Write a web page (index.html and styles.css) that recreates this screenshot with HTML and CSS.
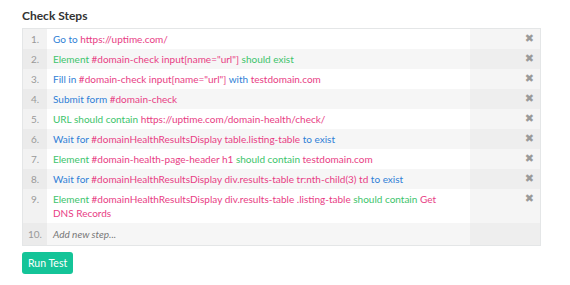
FILE: index.html
```html
<!DOCTYPE html>
<html lang="en">
  <head>
    <title>Check Steps</title>
    <meta charset="utf-8">
    <link rel="stylesheet" href="styles.css">
  </head>
  <body>
  <div class="page">
    <h3 class="title">Check Steps</h3>

    <table class="steps">
      <tr>
        <td class="num">1.</td>
        <td class="desc"><span class="kw">Go to</span> <span class="val">https://uptime.com/</span></td>
        <td class="act"><span class="del">&#10006;</span></td>
      </tr>
      <tr>
        <td class="num">2.</td>
        <td class="desc"><span class="ok">Element</span> <span class="val">#domain-check input[name="url"]</span> <span class="ok">should exist</span></td>
        <td class="act"><span class="del">&#10006;</span></td>
      </tr>
      <tr>
        <td class="num">3.</td>
        <td class="desc"><span class="kw">Fill in</span> <span class="val">#domain-check input[name="url"]</span> <span class="kw">with</span> <span class="val">testdomain.com</span></td>
        <td class="act"><span class="del">&#10006;</span></td>
      </tr>
      <tr>
        <td class="num">4.</td>
        <td class="desc"><span class="kw">Submit form</span> <span class="val">#domain-check</span></td>
        <td class="act"><span class="del">&#10006;</span></td>
      </tr>
      <tr>
        <td class="num">5.</td>
        <td class="desc"><span class="ok">URL should contain</span> <span class="val">https://uptime.com/domain-health/check/</span></td>
        <td class="act"><span class="del">&#10006;</span></td>
      </tr>
      <tr>
        <td class="num">6.</td>
        <td class="desc"><span class="kw">Wait for</span> <span class="val">#domainHealthResultsDisplay table.listing-table</span> <span class="kw">to exist</span></td>
        <td class="act"><span class="del">&#10006;</span></td>
      </tr>
      <tr>
        <td class="num">7.</td>
        <td class="desc"><span class="ok">Element</span> <span class="val">#domain-health-page-header h1</span> <span class="ok">should contain</span> <span class="val">testdomain.com</span></td>
        <td class="act"><span class="del">&#10006;</span></td>
      </tr>
      <tr>
        <td class="num">8.</td>
        <td class="desc"><span class="kw">Wait for</span> <span class="val">#domainHealthResultsDisplay div.results-table tr:nth-child(3) td</span> <span class="kw">to exist</span></td>
        <td class="act"><span class="del">&#10006;</span></td>
      </tr>
      <tr>
        <td class="num">9.</td>
        <td class="desc"><span class="ok">Element</span> <span class="val">#domainHealthResultsDisplay div.results-table .listing-table</span> <span class="ok">should contain</span> <span class="val">Get DNS Records</span></td>
        <td class="act"><span class="del">&#10006;</span></td>
      </tr>
      <tr class="new">
        <td class="num">10.</td>
        <td class="desc"><span class="placeholder">Add new step...</span></td>
        <td class="act"></td>
      </tr>
    </table>

    <button class="run">Run Test</button>
  </div>
  </body>
</html>
```

FILE: styles.css
```css
body {
  margin: 0;
  padding: 0;
  background: #ffffff;
  color: #333333;
  font-family: Lato, sans-serif;
  font-size: 10px;
}

.page {
  padding: 8px 29px 0 22px;
}

.title {
  margin: 0 0 5px;
  font-size: 12px;
  font-weight: 700;
  color: #333;
  line-height: 15px;
}

.steps {
  width: 100%;
  border-collapse: collapse;
  border: 1px solid #e4e6e7;
}

.steps td {
  padding: 3px 0;
  line-height: 14px;
  vertical-align: top;
}

.steps tr:nth-child(odd) {
  background: #ffffff;
}
.steps tr:nth-child(even) {
  background: #f6f6f6;
}

.num {
  width: 24px;
  text-align: center;
  color: #999;
  background: #f2f2f2;
}
.steps tr:nth-child(even) .num {
  background: #ebebeb;
}

.desc {
  padding-left: 6px !important;
  padding-right: 22px !important;
}

.act {
  width: 70px;
  text-align: right;
  background: #f5f5f5;
}
.steps tr:nth-child(even) .act {
  background: #eeeeee;
}

.del {
  display: inline-block;
  vertical-align: top;
  padding-right: 6px;
  color: #9a9a9a;
  font-size: 11px;
  line-height: 14px;
  font-family: "DejaVu Sans", sans-serif;
  cursor: pointer;
}

.steps .new td {
  padding: 4px 0;
}
.steps .new .desc {
  padding-left: 6px !important;
}

.kw {
  color: #2f7fd6;
}
.val {
  color: #e83d84;
}
.ok {
  color: #3cc46b;
}

.placeholder {
  color: #777;
  font-style: italic;
}

.run {
  margin-top: 6px;
  padding: 4px 6px;
  border: 0;
  border-radius: 3px;
  background: #14c498;
  color: #fff;
  font-family: Lato, sans-serif;
  font-size: 10.5px;
  line-height: 14px;
}
```
